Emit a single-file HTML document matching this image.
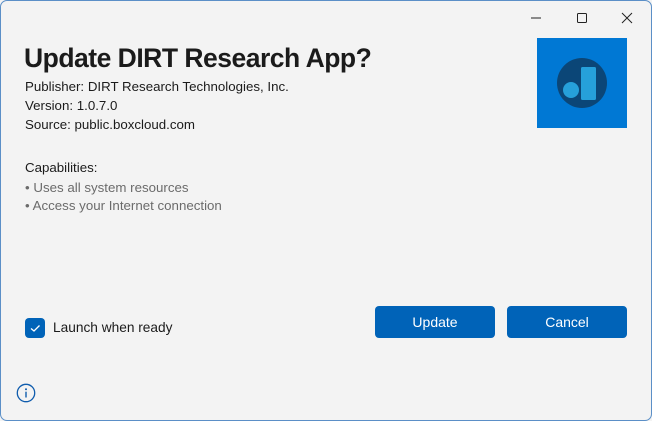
<!DOCTYPE html>
<html><head><meta charset="utf-8"><style>
html,body{margin:0;padding:0;}
body{width:652px;height:421px;background:#f3f3f3;position:relative;overflow:hidden;font-family:"Segoe UI","Liberation Sans",sans-serif;color:#1b1b1b;}
.frame{position:absolute;left:0;top:0;width:650px;height:419px;border:1px solid #5b8fc7;border-radius:7px;background:#f3f3f3;}
.t{position:absolute;white-space:nowrap;}
h1{position:absolute;left:24px;top:40px;margin:0;font-size:26.5px;font-weight:600;letter-spacing:-0.5px;line-height:36px;}
.s{font-size:13.3px;line-height:19px;}
.g{color:#6b6b6b;}
.btn{position:absolute;top:306px;width:120px;height:32px;background:#0063b8;border-radius:4px;color:#fff;font-size:14px;text-align:center;line-height:33px;}
</style></head><body>
<div class="frame"></div>
<svg class="t" style="left:528px;top:12px" width="110" height="12" viewBox="0 0 110 12">
<line x1="3" y1="6" x2="13" y2="6" stroke="#222" stroke-width="1"/>
<rect x="49.5" y="1.5" width="9" height="9" rx="1" fill="none" stroke="#222" stroke-width="1"/>
<path d="M94 1 L104 11 M104 1 L94 11" stroke="#222" stroke-width="1"/>
</svg>
<h1>Update DIRT Research App?</h1>
<div class="t s" style="left:25px;top:77px">Publisher: DIRT Research Technologies, Inc.</div>
<div class="t s" style="left:25px;top:96px">Version: 1.0.7.0</div>
<div class="t s" style="left:25px;top:115px">Source: public.boxcloud.com</div>
<div class="t s" style="left:25px;top:158px">Capabilities:</div>
<div class="t s g" style="left:25px;top:178px">• Uses all system resources</div>
<div class="t s g" style="left:25px;top:196px">• Access your Internet connection</div>
<svg class="t" style="left:537px;top:38px" width="90" height="90" viewBox="0 0 90 90">
<rect width="90" height="90" fill="#0078d4"/>
<circle cx="45" cy="45" r="25" fill="#0b4677"/>
<rect x="44" y="29" width="15" height="33" rx="1.5" fill="#26a0da"/>
<circle cx="34" cy="52" r="8" fill="#26a0da"/>
</svg>
<div class="t" style="left:25px;top:318px;width:20px;height:20px;background:#0063b8;border-radius:4px"></div>
<svg class="t" style="left:25px;top:318px" width="20" height="20"><path d="M6 10.5 L9 13 L14.5 7.5" fill="none" stroke="#fff" stroke-width="1.3"/></svg>
<div class="t" style="left:53px;top:318px;font-size:13.7px;line-height:19px">Launch when ready</div>
<div class="btn" style="left:375px">Update</div>
<div class="btn" style="left:507px">Cancel</div>
<svg class="t" style="left:16px;top:383px" width="20" height="20" viewBox="0 0 20 20">
<circle cx="10" cy="10" r="8.7" fill="none" stroke="#0f5cad" stroke-width="1.3"/>
<circle cx="10" cy="6.3" r="1" fill="#0f5cad"/>
<line x1="10" y1="8.7" x2="10" y2="14.5" stroke="#0f5cad" stroke-width="1.4"/>
</svg>
</body></html>
